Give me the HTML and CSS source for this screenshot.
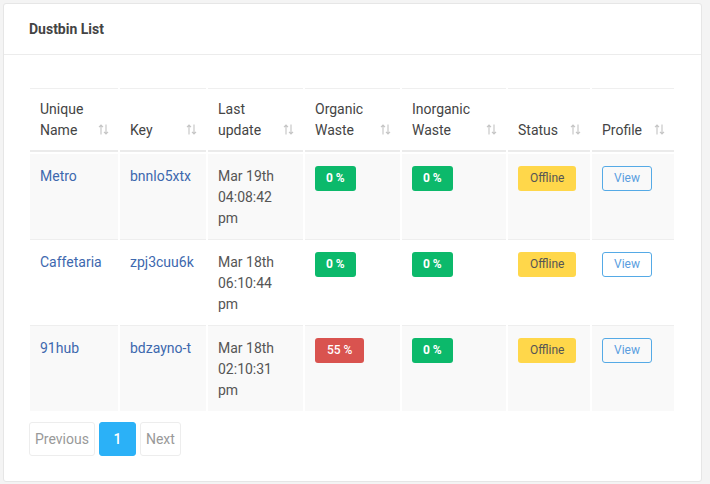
FILE: index.html
```html
<!DOCTYPE html>
<html>
<head>
<meta charset="utf-8">
<link rel="stylesheet" href="styles.css">
</head>
<body>
<div class="card">
  <div class="card-header">Dustbin List</div>
  <div class="card-body">
    <table class="dt">
      <thead>
        <tr>
          <th class="c1"><div class="th-in"><span>Unique Name</span><svg class="sort" viewBox="0 0 11 11"><path d="M3 10.5V1M1 3.2L3 1l2 2.2M8 0.5V10M6 7.8L8 10l2-2.2"/></svg></div></th>
          <th class="c2"><div class="th-in"><span>Key</span><svg class="sort" viewBox="0 0 11 11"><path d="M3 10.5V1M1 3.2L3 1l2 2.2M8 0.5V10M6 7.8L8 10l2-2.2"/></svg></div></th>
          <th class="c3"><div class="th-in"><span>Last update</span><svg class="sort" viewBox="0 0 11 11"><path d="M3 10.5V1M1 3.2L3 1l2 2.2M8 0.5V10M6 7.8L8 10l2-2.2"/></svg></div></th>
          <th class="c4"><div class="th-in"><span>Organic Waste</span><svg class="sort" viewBox="0 0 11 11"><path d="M3 10.5V1M1 3.2L3 1l2 2.2M8 0.5V10M6 7.8L8 10l2-2.2"/></svg></div></th>
          <th class="c5"><div class="th-in"><span>Inorganic Waste</span><svg class="sort" viewBox="0 0 11 11"><path d="M3 10.5V1M1 3.2L3 1l2 2.2M8 0.5V10M6 7.8L8 10l2-2.2"/></svg></div></th>
          <th class="c6"><div class="th-in"><span>Status</span><svg class="sort" viewBox="0 0 11 11"><path d="M3 10.5V1M1 3.2L3 1l2 2.2M8 0.5V10M6 7.8L8 10l2-2.2"/></svg></div></th>
          <th class="c7"><div class="th-in"><span>Profile</span><svg class="sort" viewBox="0 0 11 11"><path d="M3 10.5V1M1 3.2L3 1l2 2.2M8 0.5V10M6 7.8L8 10l2-2.2"/></svg></div></th>
        </tr>
      </thead>
      <tbody>
        <tr class="odd">
          <td><a class="lnk">Metro</a></td>
          <td><a class="lnk">bnnlo5xtx</a></td>
          <td>Mar 19th 04:08:42 pm</td>
          <td><span class="badge green">0 %</span></td>
          <td><span class="badge green">0 %</span></td>
          <td><span class="badge yellow">Offline</span></td>
          <td><span class="btn-view">View</span></td>
        </tr>
        <tr>
          <td><a class="lnk">Caffetaria</a></td>
          <td><a class="lnk">zpj3cuu6k</a></td>
          <td>Mar 18th 06:10:44 pm</td>
          <td><span class="badge green">0 %</span></td>
          <td><span class="badge green">0 %</span></td>
          <td><span class="badge yellow">Offline</span></td>
          <td><span class="btn-view">View</span></td>
        </tr>
        <tr class="odd">
          <td><a class="lnk">91hub</a></td>
          <td><a class="lnk">bdzayno-t</a></td>
          <td>Mar 18th 02:10:31 pm</td>
          <td><span class="badge red">55 %</span></td>
          <td><span class="badge green">0 %</span></td>
          <td><span class="badge yellow">Offline</span></td>
          <td><span class="btn-view">View</span></td>
        </tr>
      </tbody>
    </table>
    <div class="pager">
      <span class="pg">Previous</span>
      <span class="pg active">1</span>
      <span class="pg">Next</span>
    </div>
  </div>
</div>
</body>
</html>
```
FILE: styles.css
```css
* { box-sizing: border-box; }
html, body { margin: 0; padding: 0; background: #f4f4f4; }
body {
  font-family: Roboto, "Liberation Sans", Arial, sans-serif;
  font-size: 14px;
  color: #555;
  padding: 3px 8px 2px 3px;
}
.card {
  background: #fff;
  border: 1px solid #e6e6e6;
  border-radius: 3px;
  width: 699px;
  height: 479px;
}
.card-header {
  height: 51px;
  padding: 17px 0 0 25px;
  font-size: 14px;
  font-weight: 700;
  color: #444;
  border-bottom: 1px solid #ececec;
}
.card-body {
  padding: 33px 24px 0 24px;
}
.dt {
  border-collapse: separate;
  border-spacing: 2px 0;
  table-layout: fixed;
  width: 648px;
}
.c1 { width: 88px; }
.c2 { width: 86px; }
.c3 { width: 95px; }
.c4 { width: 95px; }
.c5 { width: 104px; }
.c6 { width: 82px; }
.c7 { width: 82px; }
.dt th {
  text-align: left;
  font-weight: 400;
  color: #444;
  line-height: 21px;
  padding: 10px 9px 9px 10px;
  border-top: 1px solid #efefef;
  border-bottom: 2px solid #ebebeb;
  vertical-align: bottom;
}
.th-in {
  display: flex;
  justify-content: space-between;
  align-items: flex-end;
}
.sort {
  width: 11px;
  height: 11px;
  margin-bottom: 6px;
  flex: none;
  fill: none;
  stroke: #c4c4c4;
  stroke-width: 1.1;
}
.dt td {
  vertical-align: top;
  line-height: 21px;
  padding: 12px 8px 10px 10px;
  border-top: 1px solid #eeeeee;
  color: #555;
}
.dt tbody tr:first-child td { border-top: 2px solid #fff; }
.dt tr.odd td { background: #f9f9f9; }
.lnk { color: #3d68ae; text-decoration: none; }
.badge {
  display: inline-block;
  height: 25px;
  line-height: 25px;
  padding: 0 11px;
  border-radius: 3px;
  font-size: 12px;
  vertical-align: top;
}
.green { background: #0cb96b; color: #fff; font-weight: 700; }
.red { background: #d9534f; color: #fff; font-weight: 500; padding: 0 12px; }
.yellow { background: #ffd74a; color: #555; padding: 0 12px; }
.btn-view {
  display: inline-block;
  height: 25px;
  line-height: 23px;
  padding: 0 11px;
  border: 1px solid #55aae6;
  border-radius: 3px;
  color: #5a9ee0;
  font-size: 12px;
  vertical-align: top;
}
.pager {
  display: flex;
  gap: 4px;
  margin-top: 11px;
  margin-left: 1px;
}
.pg {
  height: 34px;
  line-height: 32px;
  padding: 0 5px;
  border: 1px solid #ededed;
  border-radius: 3px;
  color: #999;
  font-size: 14px;
}
.pg.active {
  background: #2bb1f7;
  border-color: #2bb1f7;
  color: #fff;
  width: 37px;
  text-align: center;
  font-weight: 500;
}
```
